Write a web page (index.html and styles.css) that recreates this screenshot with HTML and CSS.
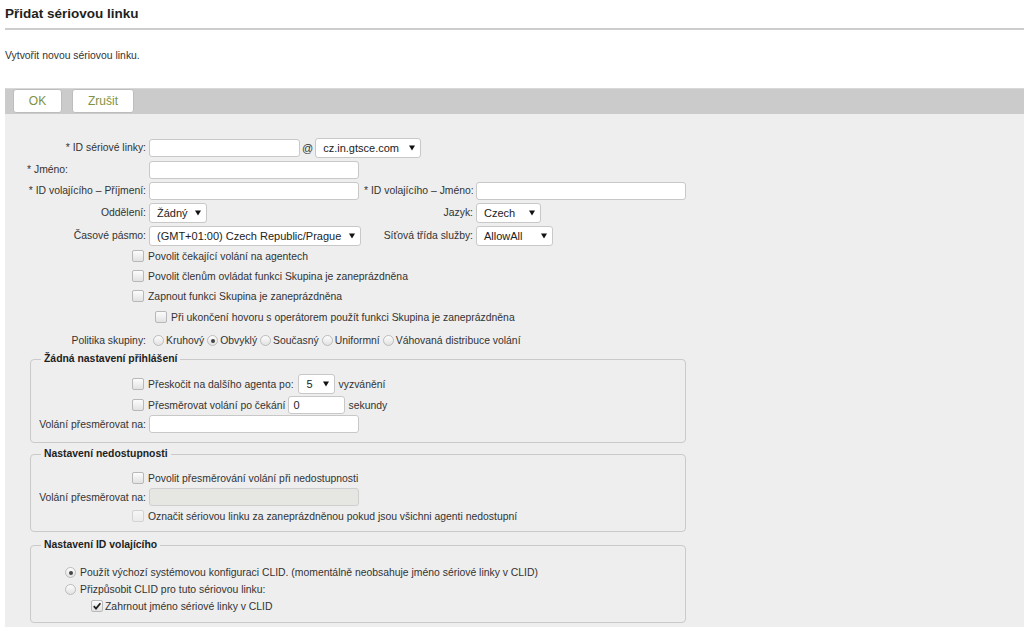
FILE: index.html
```html
<!DOCTYPE html>
<html lang="cs">
<head>
<meta charset="utf-8">
<title>Přidat sériovou linku</title>
<link rel="stylesheet" href="styles.css">
</head>
<body>
<div class="page">
  <h1 class="title">Přidat sériovou linku</h1>
  <p class="desc">Vytvořit novou sériovou linku.</p>
  <div class="toolbar">
    <button class="btn btn-ok" type="button">OK</button>
    <button class="btn btn-cancel" type="button">Zrušit</button>
  </div>
  <div class="panel">
    <div class="grid">
      <label class="lbl">* ID sériové linky:</label>
      <div class="pair span3">
        <input class="txt w-id" type="text">
        <span class="at">@</span>
        <div class="select w-domain"><span>cz.in.gtsce.com</span><svg class="arr" width="6" height="6" viewBox="0 0 6 6"><polygon points="0,0.5 6,0.5 3,5.5"/></svg></div>
      </div>

      <label class="lbl left">* Jméno:</label>
      <input class="txt w-wide" type="text">
      <span></span><span></span>

      <label class="lbl">* ID volajícího – Příjmení:</label>
      <input class="txt w-wide" type="text">
      <label class="lbl">* ID volajícího – Jméno:</label>
      <input class="txt w-wide" type="text">

      <label class="lbl">Oddělení:</label>
      <div class="select w-dept"><span>Žádný</span><svg class="arr" width="6" height="6" viewBox="0 0 6 6"><polygon points="0,0.5 6,0.5 3,5.5"/></svg></div>
      <label class="lbl">Jazyk:</label>
      <div class="select w-lang"><span>Czech</span><svg class="arr" width="6" height="6" viewBox="0 0 6 6"><polygon points="0,0.5 6,0.5 3,5.5"/></svg></div>

      <label class="lbl">Časové pásmo:</label>
      <div class="select w-tz"><span>(GMT+01:00) Czech Republic/Prague</span><svg class="arr" width="6" height="6" viewBox="0 0 6 6"><polygon points="0,0.5 6,0.5 3,5.5"/></svg></div>
      <label class="lbl">Síťová třída služby:</label>
      <div class="select w-cos"><span>AllowAll</span><svg class="arr" width="6" height="6" viewBox="0 0 6 6"><polygon points="0,0.5 6,0.5 3,5.5"/></svg></div>
    </div>

    <div class="cbrow"><span class="cb"></span>Povolit čekající volání na agentech</div>
    <div class="cbrow"><span class="cb"></span>Povolit členům ovládat funkci Skupina je zaneprázdněna</div>
    <div class="cbrow"><span class="cb"></span>Zapnout funkci Skupina je zaneprázdněna</div>
    <div class="cbrow indent"><span class="cb"></span>Při ukončení hovoru s operátorem použít funkci Skupina je zaneprázdněna</div>

    <div class="radiorow">
      <span class="lbl rlbl">Politika skupiny:</span>
      <div class="radios">
        <span class="rd"></span><span class="rtext">Kruhový</span>
        <span class="rd on"></span><span class="rtext">Obvyklý</span>
        <span class="rd"></span><span class="rtext">Současný</span>
        <span class="rd"></span><span class="rtext">Uniformní</span>
        <span class="rd"></span><span class="rtext">Váhovaná distribuce volání</span>
      </div>
    </div>

    <fieldset class="fs fs1">
      <legend>Žádná nastavení přihlášení</legend>
      <div class="frow f1r1 cbind"><span class="cb"></span>Přeskočit na dalšího agenta po:<div class="select w-ring"><span>5</span><svg class="arr" width="6" height="6" viewBox="0 0 6 6"><polygon points="0,0.5 6,0.5 3,5.5"/></svg></div><span class="after">vyzvánění</span></div>
      <div class="frow f1r2 cbind"><span class="cb"></span>Přesměrovat volání po čekání<input class="txt w-sec" type="text" value="0"><span class="after2">sekundy</span></div>
      <div class="frow f1r3"><span class="flbl">Volání přesměrovat na:</span><input class="txt w-wide" type="text"></div>
    </fieldset>

    <fieldset class="fs fs2">
      <legend>Nastavení nedostupnosti</legend>
      <div class="frow f2r1 cbind"><span class="cb"></span>Povolit přesměrování volání při nedostupnosti</div>
      <div class="frow f2r2"><span class="flbl">Volání přesměrovat na:</span><input class="txt w-wide disabled" type="text" disabled></div>
      <div class="frow f2r3 cbind"><span class="cb dis"></span>Označit sériovou linku za zaneprázdněnou pokud jsou všichni agenti nedostupní</div>
    </fieldset>

    <fieldset class="fs fs3">
      <legend>Nastavení ID volajícího</legend>
      <div class="frow f3r1 rdind"><span class="rd on"></span><span class="rtext3">Použít výchozí systémovou konfiguraci CLID. (momentálně neobsahuje jméno sériové linky v CLID)</span></div>
      <div class="frow f3r2 rdind"><span class="rd"></span><span class="rtext3">Přizpůsobit CLID pro tuto sériovou linku:</span></div>
      <div class="frow f3r3 cbind2"><span class="cb checked"><svg width="10" height="10" viewBox="0 0 10 10"><path d="M1.8 5.2 L4 7.6 L8.4 2.2" fill="none" stroke="#222" stroke-width="1.8"/></svg></span>Zahrnout jméno sériové linky v CLID</div>
    </fieldset>
  </div>
</div>
</body>
</html>
```
FILE: styles.css
```css
* { box-sizing: border-box; }
html, body { margin: 0; background: #fff; }
body {
  font-family: "Liberation Sans", Arial, sans-serif;
  font-size: 10.4px;
  color: #333;
}
.page { padding-left: 5px; }

.title {
  margin: 0;
  padding: 6px 0;
  font-size: 13.5px;
  line-height: 16px;
  font-weight: bold;
  color: #1e1e1e;
  border-bottom: 2px solid #cdcdcd;
}
.desc {
  margin: 19px 0 0;
  height: 14px;
  line-height: 14px;
  color: #333;
}

.toolbar {
  margin-top: 25px;
  height: 26px;
  background: #cbcbcb;
  border-top: 1px solid #d8d8d8;
  display: flex;
  align-items: flex-start;
  gap: 10px;
  padding-left: 8px;
}
.btn {
  height: 24px;
  padding: 0;
  background: #fff;
  border: 1px solid #bdbdbd;
  border-radius: 3px;
  font-family: "Liberation Sans", Arial, sans-serif;
  font-size: 12px;
  color: #7f9142;
}
.btn-ok { width: 49px; }
.btn-cancel { width: 62px; }

.panel {
  background: #eeeeee;
  padding: 24px 0 12px 0;
}

.grid {
  display: grid;
  grid-template-columns: 141px 212px 109px 1fr;
  column-gap: 3px;
  row-gap: 3px;
  align-items: center;
}
.span3 { grid-column: 2 / span 3; }
.lbl { text-align: right; white-space: nowrap; line-height: 14px; }
.lbl.left { text-align: left; padding-left: 22px; }

.pair { display: flex; align-items: center; gap: 2px; }
.at { font-size: 11px; color: #333; }

.txt {
  height: 18px;
  border: 1px solid #c8c8c8;
  border-radius: 3px;
  background: #fff;
  padding: 0 4px;
  font-family: "Liberation Sans", Arial, sans-serif;
  font-size: 11px;
  color: #222;
  outline: none;
  margin: 0;
}
.txt.disabled { background: #e6e6e2; border-color: #cfcfcf; }
.w-id { width: 151px; }
.w-wide { width: 210px; }
.w-sec { width: 57px; margin-left: 3px; }

.select {
  display: flex;
  align-items: center;
  justify-content: space-between;
  height: 20px;
  border: 1px solid #c8c8c8;
  border-radius: 3px;
  background: #fff;
  padding: 0 5px 0 7px;
  font-size: 11px;
  color: #222;
  white-space: nowrap;
}
.arr { fill: #111; flex: none; margin-left: 6px; }
.w-domain { width: 106px; }
.w-dept { width: 58px; }
.w-lang { width: 65px; }
.w-tz { width: 212px; }
.w-cos { width: 77px; }
.w-ring { width: 37px; margin-left: 4px; padding-left: 8px; }

.cb {
  width: 12px;
  height: 12px;
  flex: none;
  border: 1px solid #b8b8b8;
  border-radius: 2px;
  background: linear-gradient(#fcfcfc, #e2e2e2);
  margin-right: 4px;
  display: inline-flex;
  align-items: center;
  justify-content: center;
}
.cb.dis { border-color: #d3d3d3; background: linear-gradient(#f6f6f6, #ebebeb); }
.cb.checked { margin-right: 2px; }

.cbrow {
  display: flex;
  align-items: center;
  height: 20px;
  padding-left: 127px;
  white-space: nowrap;
}
.cbrow.indent { height: 22px; padding-left: 150px; }

.radiorow {
  display: flex;
  align-items: center;
  height: 23px;
  margin-top: 1px;
}
.rlbl { width: 141px; flex: none; }
.radios { display: flex; align-items: center; margin-left: 7px; white-space: nowrap; }
.rd {
  width: 11px;
  height: 11px;
  flex: none;
  border-radius: 50%;
  border: 1px solid #bcbcbc;
  background: linear-gradient(#fcfcfc, #e2e2e2);
  position: relative;
}
.rd.on::after {
  content: "";
  position: absolute;
  left: 2.5px;
  top: 2.5px;
  width: 4px;
  height: 4px;
  border-radius: 50%;
  background: #444;
}
.rtext { margin-left: 2px; margin-right: 3px; }
.rtext3 { margin-left: 4px; }

.fs {
  margin: 0 0 0 25px;
  width: 656px;
  min-width: 0;
  padding: 0;
  border: 1px solid #cacaca;
  border-radius: 4px;
}
.fs legend {
  margin-left: 10px;
  padding: 0 3px;
  font-weight: bold;
  color: #1e1e1e;
  line-height: 14px;
}
.fs1 { padding-bottom: 9px; }
.fs2 { margin-top: 4px; padding-bottom: 6px; }
.fs3 { margin-top: 6px; padding-bottom: 8px; }

.frow { display: flex; align-items: center; white-space: nowrap; }
.cbind { padding-left: 101px; }
.cbind2 { padding-left: 60px; }
.rdind { padding-left: 34px; }
.flbl { width: 115px; flex: none; text-align: right; margin-right: 3px; }
.after { margin-left: 4px; }
.after2 { margin-left: 3px; }

.f1r1 { height: 20px; margin-top: 8px; }
.f1r2 { height: 18px; margin-top: 2px; }
.f1r3 { height: 18px; margin-top: 1px; }
.f2r1 { height: 18px; margin-top: 8px; }
.f2r2 { height: 18px; margin-top: 1px; }
.f2r3 { height: 18px; margin-top: 1px; }
.f3r1 { height: 17px; margin-top: 12px; }
.f3r2 { height: 17px; }
.f3r3 { height: 16px; }
```
